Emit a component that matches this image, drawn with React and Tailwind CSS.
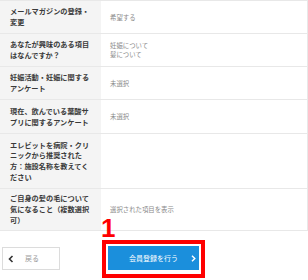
import React from "react";

const rows = [
  { h: "h-[33px]", label: ["メールマガジンの登録・", "変更"], value: ["希望する"] },
  { h: "h-[33px]", label: ["あなたが興味のある項目", "はなんですか？"], value: ["妊娠について", "髪について"] },
  { h: "h-[33px]", label: ["妊娠活動・妊娠に関する", "アンケート"], value: ["未選択"] },
  { h: "h-[34px]", label: ["現在、飲んでいる葉酸サ", "プリに関するアンケート"], value: ["未選択"] },
  { h: "h-[55px]", label: ["エレビットを病院・クリ", "ニックから推奨された", "方：施設名称を教えてく", "ださい"], value: [] },
  { h: "h-[42px]", label: ["ご自身の髪の毛について", "気になること（複数選択", "可）"], value: ["選択された項目を表示"] },
];

export default function App() {
  return (
    <div
      className="w-[308px] h-[280px] bg-white overflow-hidden"
      style={{ fontFamily: '"Noto Sans CJK JP", "Noto Sans", sans-serif' }}
    >
      <div className="border-b border-[#e8e8e8] border-r">
        {rows.map((r, i) => (
          <div key={i} className={`flex border-t border-[#e8e8e8] ${r.h}`}>
            <div className="w-[101px] shrink-0 bg-[#f4f4f4] pl-[10px] flex flex-col justify-center">
              {r.label.map((t, j) => (
                <div key={j} className="text-[7.2px] leading-[10.7px] font-bold text-[#3a3a3a] whitespace-nowrap">
                  {t}
                </div>
              ))}
            </div>
            <div className="flex-1 pl-[9px] flex flex-col justify-center">
              {r.value.map((t, j) => (
                <div key={j} className="text-[6.4px] leading-[9px] text-[#8a8a8a] whitespace-nowrap">
                  {t}
                </div>
              ))}
            </div>
          </div>
        ))}
      </div>
      <div className="flex items-start pt-[16px]">
        <div className="ml-[2px] mt-[0px] w-[58px] h-[23px] border border-[#dcdcdc] bg-white flex items-center">
          <svg width="6" height="8" viewBox="0 0 6 8" className="ml-[5px]">
            <polyline points="4.5,1 1.5,4 4.5,7" fill="none" stroke="#333" strokeWidth="1.6" />
          </svg>
          <span className="ml-[11px] text-[7px] text-[#9a9a9a]">戻る</span>
        </div>
        <div className="relative ml-[42px] -mt-[7px]">
          <span
            className="absolute left-[-1px] top-[-25px] text-[26px] leading-[26px] font-bold text-[#ff0000]"
            style={{ fontFamily: '"Liberation Sans", Arial, sans-serif' }}
          >
            1
          </span>
          <div className="border-[4px] border-[#ff0000] pt-[2px] pb-[4px] px-[2px]">
            <div className="w-[91px] h-[24px] bg-[#1b8fdc] flex items-center">
              <span className="ml-[21px] text-[7px] text-white tracking-[0px]">会員登録を行う</span>
              <svg width="5" height="7" viewBox="0 0 5 7" className="ml-[13px]">
                <polyline points="1,0.8 3.8,3.5 1,6.2" fill="none" stroke="#fff" strokeWidth="1.4" />
              </svg>
            </div>
          </div>
        </div>
      </div>
    </div>
  );
}
